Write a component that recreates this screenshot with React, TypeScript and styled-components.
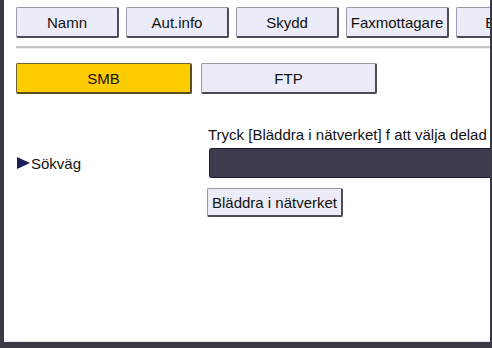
import styled, { createGlobalStyle } from 'styled-components';

const GlobalStyle = createGlobalStyle`
	html,
	body {
		margin: 0;
		padding: 0;
		background: #ffffff;
	}
	body {
		font-family: 'Liberation Sans', Arial, sans-serif;
		color: #111111;
	}
`;

const Frame = styled.div`
	box-sizing: border-box;
	width: 492px;
	height: 348px;
	display: flex;
	flex-direction: column;
	background: #ffffff;
	border-left: 4px solid #3a3a44;
	border-right: 2px solid #3a3a44;
	border-bottom: 6px solid #3a3a44;
	box-shadow: inset 0 -1px 0 #e6e6ea;
	overflow: hidden;
`;

const TabBar = styled.div`
	display: flex;
	gap: 7px;
	padding: 7px 0 0 12px;
	overflow: hidden;
`;

interface ButtonProps {
	$active?: boolean;
	$width: number;
	$height?: number;
}

const PanelButton = styled.button<ButtonProps>`
	flex: none;
	box-sizing: border-box;
	width: ${({ $width }) => $width}px;
	height: ${({ $height }) => $height ?? 31}px;
	padding: 0 3px;
	font-family: inherit;
	font-size: 15px;
	color: #111111;
	white-space: nowrap;
	overflow: hidden;
	text-align: center;
	cursor: pointer;
	border-radius: 2px;
	border: 1px solid #9a9aae;
	border-right: 2px solid #4c4c58;
	border-bottom: 2px solid #4c4c58;
	background: ${({ $active }) => ($active ? '#ffcc00' : '#ececf8')};
	${({ $active }) =>
		$active &&
		`
		border: 1px solid #6e6230;
		border-right: 2px solid #5a4e1c;
		border-bottom: 2px solid #5a4e1c;
		`}
`;

const Divider = styled.div`
	margin: 8px 0 0 12px;
	height: 2px;
	background: #c4c4c8;
	border-bottom: 1px solid #eeeeee;
`;

const ProtocolRow = styled.div`
	display: flex;
	gap: 9px;
	padding: 14px 0 0 12px;
`;

const PathSection = styled.div`
	display: grid;
	grid-template-columns: 191px 1fr;
	grid-template-rows: auto 30px auto;
	margin-top: 30px;
	padding-left: 13px;
`;

const PathLabel = styled.div`
	grid-column: 1;
	grid-row: 2;
	display: flex;
	align-items: center;
	font-size: 15px;
	color: #111111;
`;

const Marker = styled.span`
	width: 0;
	height: 0;
	border-top: 6px solid transparent;
	border-bottom: 6px solid transparent;
	border-left: 13px solid #1c1c5a;
	margin-right: 1px;
`;

const Hint = styled.div`
	grid-column: 2;
	grid-row: 1;
	font-size: 15px;
	white-space: nowrap;
	overflow: hidden;
	height: 24px;
	line-height: 22px;
`;

const PathField = styled.div`
	grid-column: 2;
	grid-row: 2;
	box-sizing: border-box;
	margin-left: 1px;
	height: 30px;
	background: #3c3c4c;
	border: 1px solid #1c1c38;
	border-right: none;
	border-radius: 3px 0 0 3px;
`;

const BrowseCell = styled.div`
	grid-column: 2;
	grid-row: 3;
	padding-top: 10px;
	margin-left: -1px;
`;

const tabs = ['Namn', 'Aut.info', 'Skydd', 'Faxmottagare', 'E-post'];

const App = () => (
	<>
		<GlobalStyle />
		<Frame>
			<TabBar>
				{tabs.map((tab) => (
					<PanelButton key={tab} $width={103}>
						{tab}
					</PanelButton>
				))}
			</TabBar>
			<Divider />
			<ProtocolRow>
				<PanelButton $active $width={176}>
					SMB
				</PanelButton>
				<PanelButton $width={176}>FTP</PanelButton>
			</ProtocolRow>
			<PathSection>
				<Hint>Tryck [Bläddra i nätverket] f att välja delad mapp.</Hint>
				<PathLabel>
					<Marker />
					Sökväg
				</PathLabel>
				<PathField />
				<BrowseCell>
					<PanelButton $width={136} $height={29}>
						Bläddra i nätverket
					</PanelButton>
				</BrowseCell>
			</PathSection>
		</Frame>
	</>
);

export default App;
